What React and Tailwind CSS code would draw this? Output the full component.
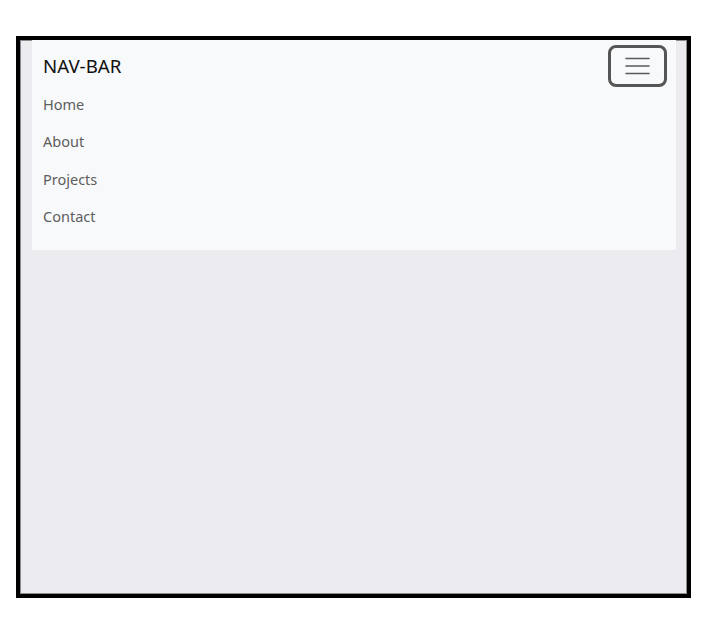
export default function App() {
    const links = ['Home', 'About', 'Projects', 'Contact'];

    return (
        <div className="min-h-screen bg-white pt-[36px] pl-[16px]" style={{ fontFamily: '"Noto Sans", "Open Sans", sans-serif' }}>
            <div className="w-[675px] h-[562px] border-4 border-black bg-[#ecebf0] shadow-[inset_0_0_0_1px_#8c8c8c] pl-[12px] pr-[11px]">
                <nav className="bg-[#f8f9fa] pt-[7px] pb-[14px] pl-[11px] pr-[9px]">
                    <div className="flex items-center justify-between h-[38px]">
                        <a href="#" className="text-[18.7px] leading-[24px] text-[#111]">NAV-BAR</a>
                        <button className="-my-[2px] w-[59px] h-[42px] flex items-center justify-center rounded-[8px] border-[3px] border-[#555]">
                            <svg width="25" height="18" viewBox="0 0 25 18" fill="none">
                                <path d="M1 1.5h23M1 9h23M1 16.5h23" stroke="#5a5a5a" strokeWidth="1.6" strokeLinecap="round" />
                            </svg>
                        </button>
                    </div>
                    <ul className="flex flex-col pt-[1px]">
                        {links.map((link) => (
                            <li key={link} className="h-[37.5px] flex items-center">
                                <a href="#" className="text-[14.5px] text-[#5e5e5e]">{link}</a>
                            </li>
                        ))}
                    </ul>
                </nav>
            </div>
        </div>
    );
}
